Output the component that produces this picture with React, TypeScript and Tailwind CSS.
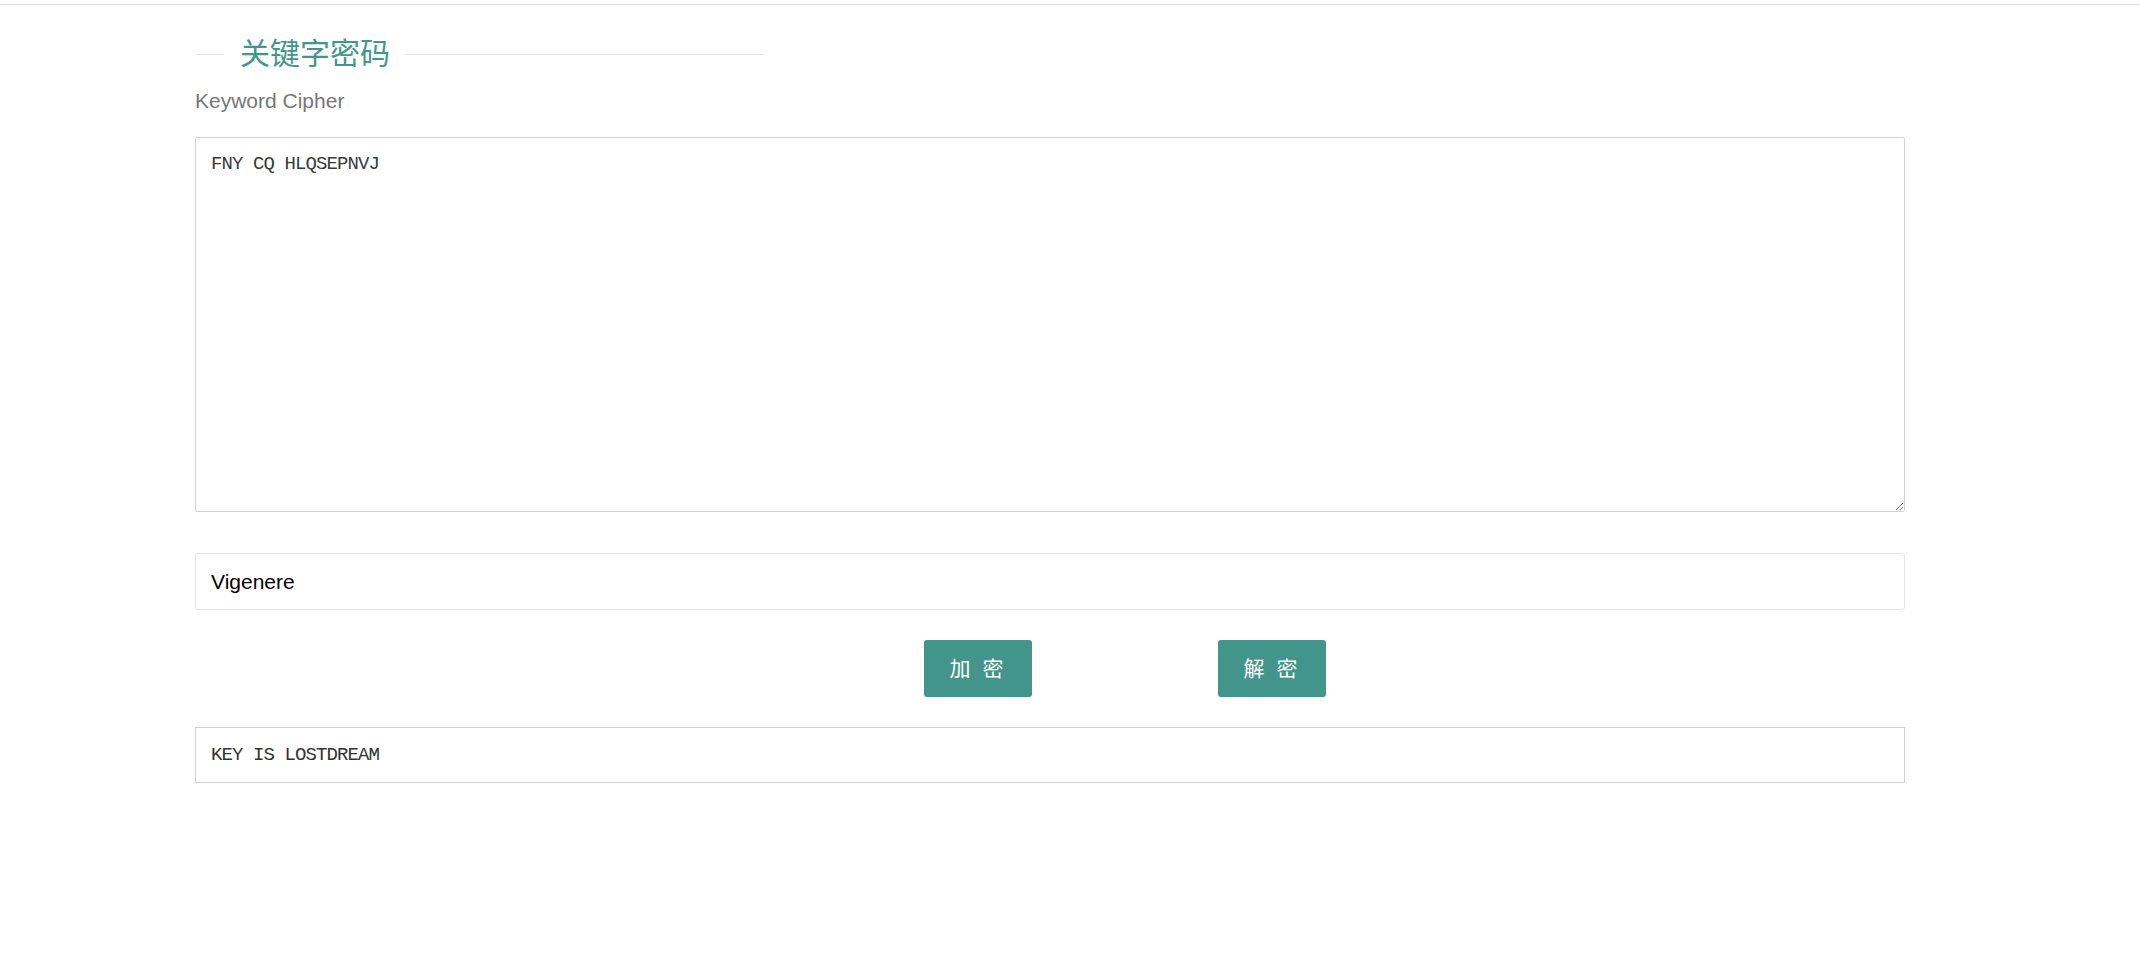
import React from "react";

const sans = "font-['Liberation_Sans','Noto_Sans_CJK_SC',sans-serif]";
const mono = "font-['Liberation_Mono','Noto_Sans_CJK_SC',monospace]";

const FieldTitle: React.FC<{ title: string }> = ({ title }) => {
  return (
    <div className="flex items-center w-[570px] h-[36px]">
      <span className="w-[29px] h-px bg-[#e6e6e6]" />
      <span className="px-4 text-[30px] leading-[36px] text-[#43968a]">
        {title}
      </span>
      <span className="flex-1 h-px bg-[#e6e6e6]" />
    </div>
  );
};

const ActionButton: React.FC<{ label: string }> = ({ label }) => {
  return (
    <button
      type="button"
      className="w-[108px] h-[57px] rounded-[3px] bg-[#43948a] text-white text-[21px] tracking-[3px] hover:opacity-90"
    >
      {label}
    </button>
  );
};

export default function App() {
  return (
    <div className={`min-h-[959px] bg-white ${sans}`}>
      <div className="h-[5px] border-b border-[#d9d9d9]" />
      <div className="pl-[195px] pr-[235px] pt-[31px]">
        <FieldTitle title="关键字密码" />
        <p className="mt-[17px] text-[21px] leading-[24px] text-[#777777]">
          Keyword Cipher
        </p>

        <textarea
          className={`block mt-[24px] w-full h-[375px] rounded-[2px] border border-[#d2d2d2] pl-[15px] pr-[15px] pt-[14px] text-[19px] leading-[24px] tracking-[-0.9px] text-[#3a3a3a] outline-none ${mono}`}
          defaultValue="FNY CQ HLQSEPNVJ"
        />

        <input
          type="text"
          className="block mt-[41px] w-full h-[57px] rounded-[3px] border border-[#e6e6e6] px-[15px] text-[21px] text-black outline-none"
          defaultValue="Vigenere"
        />

        <div className="flex mt-[30px] pl-[729px] gap-[186px]">
          <ActionButton label="加 密" />
          <ActionButton label="解 密" />
        </div>

        <div
          className={`flex items-center mt-[30px] h-[56px] border border-[#d2d2d2] px-[15px] text-[19px] tracking-[-0.9px] text-[#333333] ${mono}`}
        >
          KEY IS LOSTDREAM
        </div>
      </div>
    </div>
  );
}
